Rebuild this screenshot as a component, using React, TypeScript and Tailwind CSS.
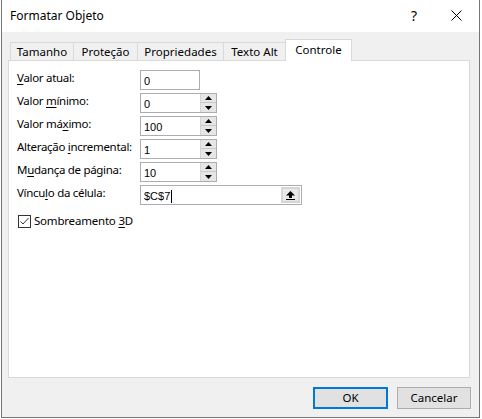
import React from 'react';

const ui = "font-['Noto_Sans',sans-serif] text-[11.5px] leading-none text-black";
const field = "font-['Liberation_Sans',Arial,sans-serif] text-[11px] leading-none text-black";

const Label: React.FC<{ before: string; hot: string; after: string }> = ({ before, hot, after }) => (
  <div className="w-[123px] shrink-0 whitespace-nowrap pb-[4px] tracking-[-0.3px]">
    {before}
    <span className="underline underline-offset-2">{hot}</span>
    {after}
  </div>
);

const SpinButtons: React.FC = () => (
  <div className="flex w-[16px] flex-col border-l border-[#d4d4d4] bg-[#e6e6e6]">
    <div className="flex h-[9px] items-center justify-center border-b border-[#c8c8c8]">
      <svg width="7" height="4" viewBox="0 0 7 4">
        <path d="M0 4 L3.5 0 L7 4 Z" fill="#000" />
      </svg>
    </div>
    <div className="flex flex-1 items-center justify-center">
      <svg width="7" height="4" viewBox="0 0 7 4">
        <path d="M0 0 L7 0 L3.5 4 Z" fill="#000" />
      </svg>
    </div>
  </div>
);

const SpinRow: React.FC<{ label: React.ReactNode; value: string }> = ({ label, value }) => (
  <div className="flex items-center">
    {label}
    <div className="flex h-[20px] w-[77px] border border-[#abadb3] bg-white">
      <div className={`${field} flex flex-1 items-center pl-[3px] pt-[2px]`}>{value}</div>
      <SpinButtons />
    </div>
  </div>
);

const Tab: React.FC<{ label: string; w: string; active?: boolean }> = ({ label, w, active }) =>
  active ? (
    <div
      className={`${w} relative z-10 -mb-px -ml-px flex h-[22px] items-center justify-center border border-b-0 border-[#d9d9d9] bg-white pb-[2px]`}
    >
      {label}
    </div>
  ) : (
    <div
      className={`${w} -ml-px flex h-[18px] items-center justify-center whitespace-nowrap border border-b-0 border-[#d9d9d9] bg-[#f0f0f0] first:ml-0`}
    >
      {label}
    </div>
  );

export default function App() {
  return (
    <div className={`${ui} h-[419px] w-[482px] bg-white`}>
      <div className="ml-px flex h-[418px] w-[479px] flex-col border-x border-b border-[#767676]">
        {/* title bar */}
        <div className="flex h-[32px] shrink-0 items-center bg-white pl-[8px] pb-[1px] text-[12px]">
          <span className="flex-1">Formatar Objeto</span>
          <span className="mr-[34px] text-[14px]">?</span>
          <svg className="mr-[17px]" width="11" height="11" viewBox="0 0 11 11">
            <path d="M0.5 0.5 L10.5 10.5 M10.5 0.5 L0.5 10.5" stroke="#000" strokeWidth="1" />
          </svg>
        </div>

        {/* body */}
        <div className="flex flex-1 flex-col bg-[#f0f0f0]">
          <div className="ml-[8px] mt-[7px] flex h-[21px] items-end">
            <Tab label="Tamanho" w="w-[64px]" />
            <Tab label="Proteção" w="w-[65px]" />
            <Tab label="Propriedades" w="w-[87px]" />
            <Tab label="Texto Alt" w="w-[63px]" />
            <Tab label="Controle" w="w-[67px]" active />
          </div>

          <div className="ml-[6px] flex h-[318px] w-[462px] flex-col gap-[3px] border border-[#d9d9d9] bg-white pl-[8px] pt-[9px]">
            <div className="flex items-center">
              <Label before="" hot="V" after="alor atual:" />
              <div className={`${field} flex h-[20px] w-[60px] items-center border border-[#abadb3] pl-[3px] pt-[2px]`}>
                0
              </div>
            </div>
            <SpinRow label={<Label before="Valor " hot="m" after="ínimo:" />} value="0" />
            <SpinRow label={<Label before="Valor má" hot="x" after="imo:" />} value="100" />
            <SpinRow label={<Label before="Alteração " hot="i" after="ncremental:" />} value="1" />
            <SpinRow label={<Label before="M" hot="u" after="dança de página:" />} value="10" />
            <div className="flex items-center">
              <Label before="Víncu" hot="l" after="o da célula:" />
              <div className="flex h-[20px] w-[162px] border border-[#abadb3] bg-white">
                <div className={`${field} flex flex-1 items-center pl-[3px] pt-[2px]`}>
                  $C$7
                  <span className="ml-px inline-block h-[13px] w-px bg-black" />
                </div>
                <div className="m-px flex w-[19px] items-center justify-center border-2 border-[#d6d6d6] bg-[#e8e8e8]">
                  <svg width="9" height="9" viewBox="0 0 9 9">
                    <path d="M4.5 0 L9 4.5 L6 4.5 L6 7 L3 7 L3 4.5 L0 4.5 Z" fill="#000" />
                    <rect x="0" y="8" width="9" height="1" fill="#000" />
                  </svg>
                </div>
              </div>
            </div>

            <div className="ml-px mt-[7px] flex items-center gap-[3px]">
              <div className="flex h-[13px] w-[13px] items-center justify-center border border-[#333]">
                <svg width="11" height="11" viewBox="0 0 11 11">
                  <path d="M1.5 5.5 L4 8 L9.5 2" stroke="#333" strokeWidth="1" fill="none" />
                </svg>
              </div>
              <span className="pb-[2px] tracking-[-0.2px]">
                Sombreamento <span className="underline underline-offset-2">3</span>D
              </span>
            </div>
          </div>

          <div className="mr-[8px] mt-[9px] flex justify-end gap-[9px]">
            <button className="flex h-[22px] w-[75px] items-center justify-center border-2 border-[#0078d7] bg-[#e1e1e1] pb-[1px]">
              OK
            </button>
            <button className="flex h-[22px] w-[74px] items-center justify-center border border-[#adadad] bg-[#e1e1e1] pb-[1px]">
              Cancelar
            </button>
          </div>
        </div>
      </div>
    </div>
  );
}
